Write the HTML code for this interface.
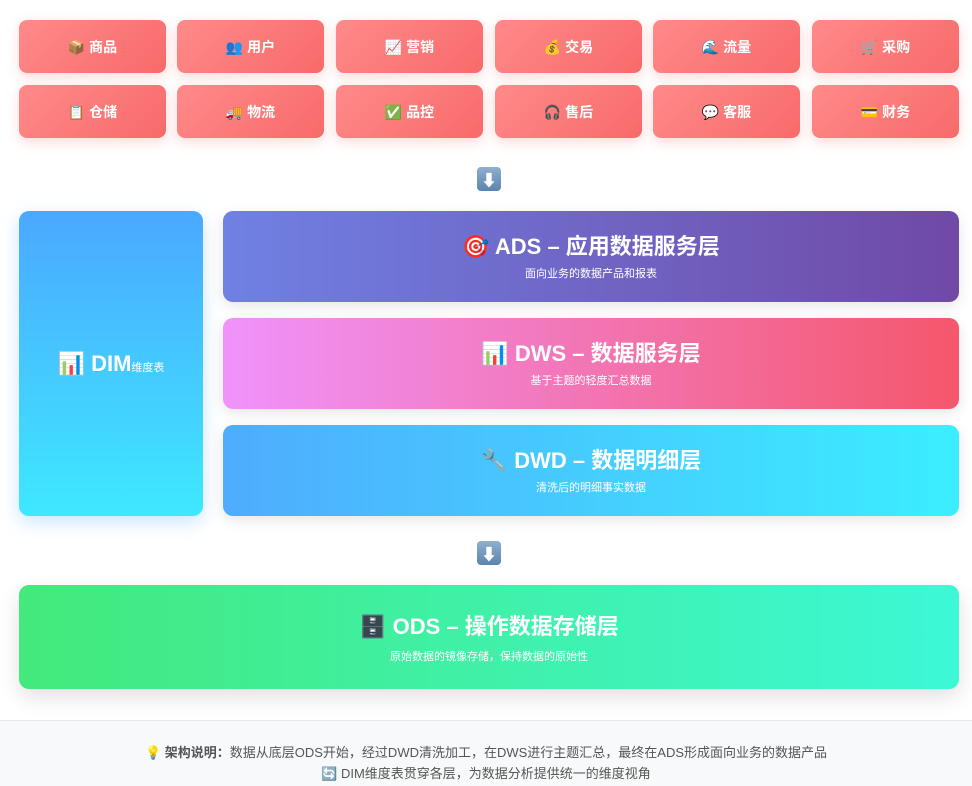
<!DOCTYPE html>
<html><head><meta charset="utf-8"><style>
*{box-sizing:border-box;margin:0;padding:0}
body{width:972px;height:786px;background:#fff;font-family:"Liberation Sans","Noto Sans CJK SC",sans-serif;position:relative;overflow:hidden}
.t{position:absolute;width:147px;height:53px;border-radius:8px;background:linear-gradient(135deg,#ff8a8a,#f86a6a);color:#fff;font-weight:bold;font-size:14px;display:flex;align-items:center;justify-content:center;box-shadow:0 4px 12px rgba(255,107,107,.25)}
.arr{position:absolute;left:477px;width:24px;height:24px;border-radius:4px;background:linear-gradient(#8fb0d0,#5a84b0);color:#fff;font-size:16px;font-weight:bold;display:flex;align-items:center;justify-content:center}
.L{position:absolute;left:223px;width:736px;height:91px;border-radius:10px;color:#fff;text-align:center;box-shadow:0 4px 14px rgba(0,0,0,.1)}
.L h2{font-size:22px;margin-top:22px;line-height:28px}
.L p{font-size:11px;margin-top:4px}
</style></head><body>
<div class="t" style="left:19px;top:20px">📦 商品</div>
<div class="t" style="left:177px;top:20px">👥 用户</div>
<div class="t" style="left:336px;top:20px">📈 营销</div>
<div class="t" style="left:495px;top:20px">💰 交易</div>
<div class="t" style="left:653px;top:20px">🌊 流量</div>
<div class="t" style="left:812px;top:20px">🛒 采购</div>
<div class="t" style="left:19px;top:85px">📋 仓储</div>
<div class="t" style="left:177px;top:85px">🚚 物流</div>
<div class="t" style="left:336px;top:85px">✅ 品控</div>
<div class="t" style="left:495px;top:85px">🎧 售后</div>
<div class="t" style="left:653px;top:85px">💬 客服</div>
<div class="t" style="left:812px;top:85px">💳 财务</div>
<div class="arr" style="top:167px">⬇</div>
<div style="position:absolute;left:19px;top:211px;width:184px;height:305px;border-radius:10px;background:linear-gradient(#4ba8ff,#3ee8ff);color:#fff;display:flex;align-items:center;justify-content:center;font-weight:bold;font-size:22px;box-shadow:0 6px 18px rgba(79,172,254,.3)">📊 DIM<span style="font-size:11px;font-weight:normal;margin-top:6px">维度表</span></div>
<div class="L" style="top:211px;background:linear-gradient(90deg,#6f81e3,#7049a6)"><h2>🎯 ADS – 应用数据服务层</h2><p>面向业务的数据产品和报表</p></div>
<div class="L" style="top:318px;background:linear-gradient(90deg,#f093fb,#f5576c)"><h2>📊 DWS – 数据服务层</h2><p>基于主题的轻度汇总数据</p></div>
<div class="L" style="top:425px;background:linear-gradient(90deg,#4facfe,#3beeff)"><h2>🔧 DWD – 数据明细层</h2><p>清洗后的明细事实数据</p></div>
<div class="arr" style="top:541px">⬇</div>
<div class="L" style="left:19px;width:940px;height:104px;top:585px;background:linear-gradient(90deg,#43e97b,#3cf8d6);box-shadow:0 8px 22px rgba(0,0,0,.12)"><h2 style="margin-top:28px">🗄️ ODS – 操作数据存储层</h2><p style="margin-top:7px">原始数据的镜像存储，保持数据的原始性</p></div>
<div style="position:absolute;left:0;top:720px;width:972px;height:66px;background:#f8f9fa;border-top:1px solid #e6e8eb;text-align:center;color:#555;font-size:13px;line-height:21px;padding-top:21px">
<div>💡 <b>架构说明：</b>数据从底层ODS开始，经过DWD清洗加工，在DWS进行主题汇总，最终在ADS形成面向业务的数据产品</div>
<div>🔄 DIM维度表贯穿各层，为数据分析提供统一的维度视角</div>
</div>
</body></html>
